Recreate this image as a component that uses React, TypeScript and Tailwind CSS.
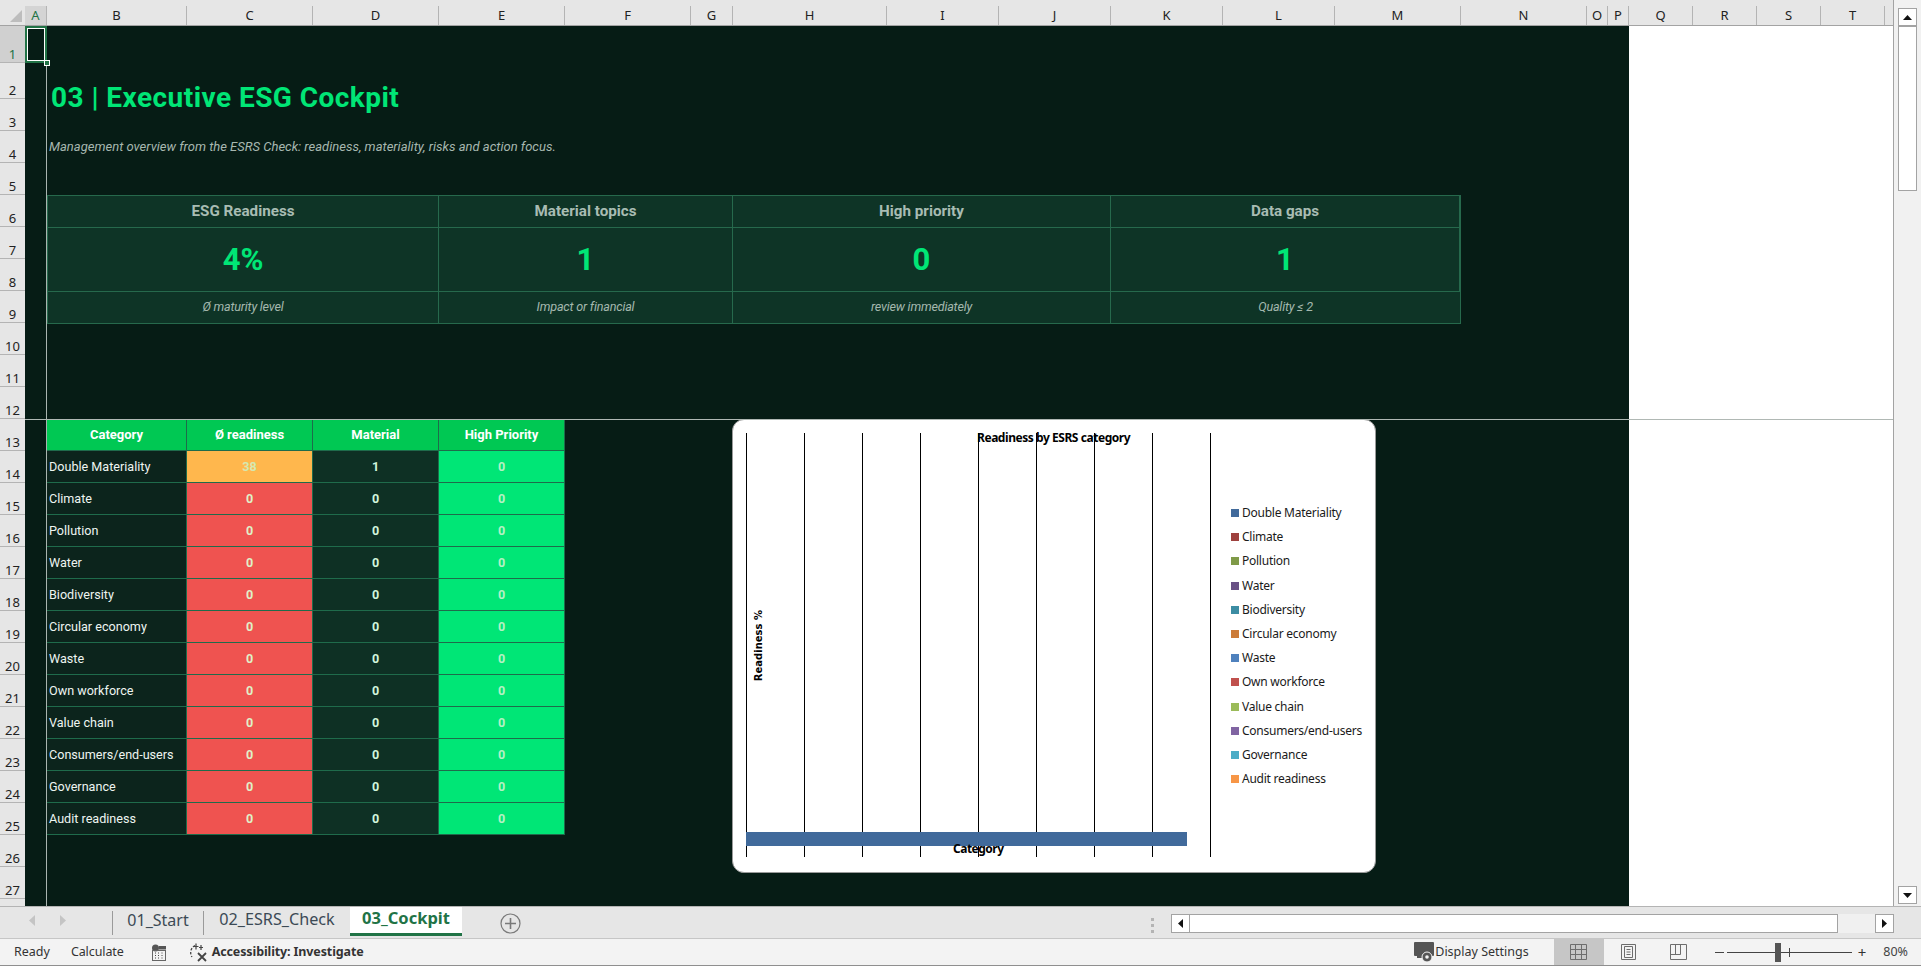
import { Fragment } from "react";

const columns = [
  { name: "A", w: "w-[22px]", active: true },
  { name: "B", w: "w-[140px]" },
  { name: "C", w: "w-[126px]" },
  { name: "D", w: "w-[126px]" },
  { name: "E", w: "w-[126px]" },
  { name: "F", w: "w-[126px]" },
  { name: "G", w: "w-[42px]" },
  { name: "H", w: "w-[154px]" },
  { name: "I", w: "w-[112px]" },
  { name: "J", w: "w-[112px]" },
  { name: "K", w: "w-[112px]" },
  { name: "L", w: "w-[112px]" },
  { name: "M", w: "w-[126px]" },
  { name: "N", w: "w-[126px]" },
  { name: "O", w: "w-[21px]" },
  { name: "P", w: "w-[21px]" },
  { name: "Q", w: "w-[64px]" },
  { name: "R", w: "w-[64px]" },
  { name: "S", w: "w-[64px]" },
  { name: "T", w: "w-[64px]" },
];

const kpis = [
  { label: "ESG Readiness", value: "4%", note: "Ø maturity level" },
  { label: "Material topics", value: "1", note: "Impact or financial" },
  { label: "High priority", value: "0", note: "review immediately" },
  { label: "Data gaps", value: "1", note: "Quality ≤ 2" },
];

const categories = [
  { name: "Double Materiality", readiness: "38", material: "1", color: "bg-[#416a9b]" },
  { name: "Climate", readiness: "0", material: "0", color: "bg-[#9e413e]" },
  { name: "Pollution", readiness: "0", material: "0", color: "bg-[#7f9a48]" },
  { name: "Water", readiness: "0", material: "0", color: "bg-[#695185]" },
  { name: "Biodiversity", readiness: "0", material: "0", color: "bg-[#3c8da3]" },
  { name: "Circular economy", readiness: "0", material: "0", color: "bg-[#cc7b38]" },
  { name: "Waste", readiness: "0", material: "0", color: "bg-[#4f81bd]" },
  { name: "Own workforce", readiness: "0", material: "0", color: "bg-[#c0504d]" },
  { name: "Value chain", readiness: "0", material: "0", color: "bg-[#9bbb59]" },
  { name: "Consumers/end-users", readiness: "0", material: "0", color: "bg-[#8064a2]" },
  { name: "Governance", readiness: "0", material: "0", color: "bg-[#4bacc6]" },
  { name: "Audit readiness", readiness: "0", material: "0", color: "bg-[#f79646]" },
];

const rowNumbers = Array.from({ length: 27 }, (_, i) => i + 1);
const uiFont = "font-['Noto_Sans',sans-serif]";
const sheetFont = "font-['Roboto',sans-serif]";

function ColumnHeader() {
  return (
    <div className={`flex h-[26px] shrink-0 border-b border-[#a3a3a3] bg-[#e6e6e6] pt-[6px] text-[13px] text-[#222] ${uiFont}`}>
      <div className="relative w-[25px] shrink-0">
        <svg className="absolute left-[10px] top-[4px]" width="12" height="12" viewBox="0 0 12 12">
          <polygon points="12,0 12,12 0,12" fill="#bdbdbd" />
        </svg>
      </div>
      {columns.map((c) => (
        <div
          key={c.name}
          className={`${c.w} flex shrink-0 items-center justify-center border-r border-[#b4b4b4] ${c.active ? "bg-[#d4d4d4] text-[#217346]" : ""}`}
        >
          {c.name}
        </div>
      ))}
    </div>
  );
}

function RowHeader() {
  return (
    <div className={`flex w-[25px] shrink-0 flex-col bg-[#e6e6e6] text-[13px] leading-[16px] text-[#222] ${uiFont}`}>
      {rowNumbers.map((n) => (
        <div
          key={n}
          className={`flex shrink-0 items-end justify-center border-b border-[#b4b4b4] ${n === 1 ? "h-[37px] bg-[#d0d0d0] text-[#217346]" : n === 2 ? "h-[36px]" : "h-8"}`}
        >
          {n}
        </div>
      ))}
    </div>
  );
}

function KpiTable() {
  return (
    <div className="grid w-[1414px] grid-cols-[391px_294px_378px_349px] grid-rows-[31px_64px_32px] border border-[#26694c] bg-[#0e3426]">
      {kpis.map((k) => (
        <div key={k.label} className="flex items-center justify-center border-r border-[#26694c] text-[15.2px] font-bold text-[#a8bcb3] last:border-r-0">
          {k.label}
        </div>
      ))}
      {kpis.map((k) => (
        <div key={k.label} className="flex items-center justify-center border-r border-t border-[#26694c] pt-[2px] text-[31px] font-bold text-[#00e676] last:border-r-0">
          {k.value}
        </div>
      ))}
      {kpis.map((k) => (
        <div key={k.label} className="flex items-center justify-center border-r border-t border-[#26694c] text-[12.6px] italic tracking-[-0.2px] text-[#a4b8ae] last:border-r-0">
          {k.note}
        </div>
      ))}
    </div>
  );
}

function CategoryTable() {
  return (
    <div className="grid w-[518px] shrink-0 grid-cols-[140px_126px_126px_126px] auto-rows-[32px] text-[12.6px]">
      {["Category", "Ø readiness", "Material", "High Priority"].map((h) => (
        <div key={h} className="flex items-center justify-center border-b border-r border-[#1f6b4b] bg-[#00c853] text-[13px] font-bold text-white">
          {h}
        </div>
      ))}
      {categories.map((c) => (
        <Fragment key={c.name}>
          <div className="flex items-center border-b border-r border-[#1f6b4b] bg-[#0c241c] pl-[2px] pt-[2px] text-[#eef5f1]">{c.name}</div>
          <div
            className={`flex items-center justify-center border-b border-r border-[#1f6b4b] pt-[2px] font-bold ${c.readiness === "38" ? "bg-[#ffb74d] text-[#d5e8b0]" : "bg-[#ef5350] text-[#dff0c8]"}`}
          >
            {c.readiness}
          </div>
          <div className="flex items-center justify-center border-b border-r border-[#1f6b4b] bg-[#0e3024] pt-[2px] font-bold text-[#d2f5dc]">{c.material}</div>
          <div className="flex items-center justify-center border-b border-r border-[#1f6b4b] bg-[#00e676] pt-[2px] font-bold text-[#b5f0c4]">0</div>
        </Fragment>
      ))}
    </div>
  );
}

function ReadinessChart() {
  const gridX = [13.5, 71.5, 129.5, 187.5, 245.5, 303.5, 361.5, 419.5, 477.5];
  return (
    <div className={`relative ml-[167px] h-[454px] w-[644px] shrink-0 rounded-xl border border-[#9a9a9a] bg-white text-black ${uiFont}`}>
      <svg className="absolute inset-0" width="642" height="452" viewBox="0 0 642 452">
        {gridX.map((x) => (
          <line key={x} x1={x} x2={x} y1="13" y2="437" stroke="#000" strokeWidth="1" />
        ))}
        <rect x="13" y="412" width="441" height="14" fill="#416a9b" />
      </svg>
      <div className="absolute left-[244px] top-[9px] text-[12px] font-bold leading-[18px] tracking-[-0.45px]">Readiness by ESRS category</div>
      <div className="absolute left-[220px] top-[420px] text-[12px] font-bold leading-[18px] tracking-[-0.5px]">Category</div>
      <div className="absolute left-[18px] top-[190px] origin-center rotate-180 font-['DejaVu_Sans',sans-serif] text-[10px] font-bold leading-[16px] [writing-mode:vertical-rl]">Readiness %</div>
      <div className="absolute left-[498px] top-[81px] flex flex-col text-[12px] tracking-[-0.25px] text-[#1a1a1a]">
        {categories.map((c) => (
          <div key={c.name} className="flex h-[24.2px] items-center gap-[3px]">
            <span className={`h-2 w-2 ${c.color}`} />
            {c.name}
          </div>
        ))}
      </div>
    </div>
  );
}

function Sheet() {
  return (
    <div className={`relative flex min-w-0 flex-1 overflow-hidden ${sheetFont}`}>
      <div className="w-[1604px] shrink-0 bg-[#061c15] pl-[21px]">
        <div className="h-full border-l border-[#a9b5b0]">
          <div className="h-[393px] pt-[37px]">
            <div className="flex h-[68px] items-center pl-[4px] pt-[2px] text-[28px] font-bold tracking-[0.45px] text-[#00e676]">03 | Executive ESG Cockpit</div>
            <div className="flex h-8 items-center pl-[2px] text-[13px] italic text-[#a7b8b0]">
              Management overview from the ESRS Check: readiness, materiality, risks and action focus.
            </div>
            <div className="mt-8">
              <KpiTable />
            </div>
          </div>
          <div className="flex items-start">
            <CategoryTable />
            <ReadinessChart />
          </div>
        </div>
      </div>
      <div className="flex-1 bg-white" />
      {/* freeze pane line */}
      <div className="absolute inset-x-0 top-[393px] h-px bg-[#b0b8b4]" />
      {/* A1 selection */}
      <div className="absolute left-0 top-0 h-[37px] w-[22px] border-2 border-[#217346]">
        <div className="h-full w-full border border-white" />
      </div>
      <div className="absolute left-[19px] top-[34px] h-[6px] w-[6px] border border-white bg-[#217346]" />
    </div>
  );
}

function VerticalScrollbar() {
  return (
    <div className="flex w-[28px] shrink-0 flex-col items-center border-l border-[#a3a3a3] bg-[#f1f1f1] pt-2">
      <div className="flex h-[18px] w-[19px] items-center justify-center border border-[#a3a3a3] bg-white">
        <svg width="9" height="5" viewBox="0 0 9 5"><polygon points="4.5,0 9,5 0,5" fill="#111" /></svg>
      </div>
      <div className="h-[165px] w-[19px] border border-[#a3a3a3] bg-white" />
      <div className="mt-auto mb-[2px] flex h-[18px] w-[19px] items-center justify-center border border-[#a3a3a3] bg-white">
        <svg width="9" height="5" viewBox="0 0 9 5"><polygon points="0,0 9,0 4.5,5" fill="#111" /></svg>
      </div>
    </div>
  );
}

function TabBar() {
  return (
    <div className={`flex h-[32px] shrink-0 items-start border-t border-[#b4b4b4] bg-[#e6e6e6] text-[16px] ${uiFont}`}>
      <div className="flex h-[26px] w-[112px] items-center gap-[25px] pl-[29px]">
        <svg width="6" height="11" viewBox="0 0 6 11"><polygon points="6,0 6,11 0,5.5" fill="#c4c4c4" /></svg>
        <svg width="6" height="11" viewBox="0 0 6 11"><polygon points="0,0 0,11 6,5.5" fill="#c4c4c4" /></svg>
      </div>
      <div className="mt-[4px] flex h-[24px] w-[91px] items-center justify-center border-l border-[#9a9a9a] pb-[7px] text-[#3c4a55]">01_Start</div>
      <div className="mt-[4px] flex h-[24px] w-[147px] items-center justify-center border-l border-[#9a9a9a] pb-[7px] text-[16.2px] text-[#3c4a55]">02_ESRS_Check</div>
      <div className="flex h-[29px] w-[112px] items-center justify-center border-b-[3px] border-[#217346] bg-white pb-[3px] text-[16.5px] font-bold text-[#217346]">03_Cockpit</div>
      <svg className="ml-[38px] mt-[6px]" width="21" height="21" viewBox="0 0 21 21" fill="none" stroke="#7a7a7a">
        <circle cx="10.5" cy="10.5" r="9.5" strokeWidth="1.2" />
        <path d="M10.5 5v11M5 10.5h11" strokeWidth="1.6" />
      </svg>
      <div className="ml-auto flex items-center">
        <div className="mr-[17px] mt-[10px] flex flex-col gap-[3px]">
          <span className="h-[3px] w-[3px] bg-[#b4b4b4]" />
          <span className="h-[3px] w-[3px] bg-[#b4b4b4]" />
          <span className="h-[3px] w-[3px] bg-[#b4b4b4]" />
        </div>
        <div className="mr-[27px] mt-[7px] flex h-[19px] w-[723px]">
          <div className="flex w-[19px] items-center justify-center border border-[#a3a3a3] bg-white">
            <svg width="5" height="9" viewBox="0 0 5 9"><polygon points="5,0 5,9 0,4.5" fill="#111" /></svg>
          </div>
          <div className="w-[648px] border-y border-r border-[#a3a3a3] bg-white" />
          <div className="flex-1 bg-[#f0f0f0]" />
          <div className="flex w-[19px] items-center justify-center border border-[#a3a3a3] bg-white">
            <svg width="5" height="9" viewBox="0 0 5 9"><polygon points="0,0 0,9 5,4.5" fill="#111" /></svg>
          </div>
        </div>
      </div>
    </div>
  );
}

function StatusBar() {
  return (
    <div className={`flex h-[28px] shrink-0 items-center border-y border-b-[#8f8f8f] border-t-[#c6c6c6] bg-[#f3f3f3] text-[12.5px] text-[#333] ${uiFont}`}>
      <span className="ml-[14px]">Ready</span>
      <span className="ml-[21px] tracking-[-0.1px]">Calculate</span>
      <svg className="ml-[27px]" width="16" height="17" viewBox="0 0 16 17">
        <circle cx="4.5" cy="4" r="3.5" fill="#555" />
        <rect x="8" y="2" width="7" height="3.5" fill="#555" />
        <rect x="1.5" y="6.5" width="13" height="10" fill="none" stroke="#666" />
        <path d="M4 9h1M7 9h1M10.5 9h1M4 11.5h1M7 11.5h1M10.5 11.5h1M4 14h1M7 14h1M10.5 14h1" stroke="#444" />
      </svg>
      <svg className="ml-[22px]" width="20" height="20" viewBox="0 0 20 20" fill="none" stroke="#444">
        <path d="M6 3.5A8 8 0 0 0 3 15" strokeWidth="1.3" strokeDasharray="2.5 1.5" />
        <path d="M7 1.5v6M4.5 4.5h5M12 3v5M10 5.5h4" strokeWidth="1.2" />
        <path d="M9 11l8 8M17 11l-8 8" strokeWidth="1.8" />
      </svg>
      <span className="ml-[3px] font-bold tracking-[-0.12px]">Accessibility: Investigate</span>
      <div className="ml-auto flex h-full items-center">
        <svg width="21" height="22" viewBox="0 0 21 22">
          <rect x="0" y="1" width="20" height="14" rx="1" fill="#555" />
          <rect x="3" y="15" width="6" height="2" fill="#555" />
          <circle cx="13" cy="16" r="5" fill="#555" stroke="#f3f3f3" />
          <circle cx="13" cy="16" r="1.8" fill="#f3f3f3" />
        </svg>
        <span className="mr-[25px]">Display Settings</span>
        <div className="flex h-full w-[50px] items-center justify-center bg-[#c6c6c6]">
          <svg width="17" height="16" viewBox="0 0 17 16" fill="none" stroke="#6d6d6d"><path d="M.5.5h16v15H.5zM.5 5.5h16M.5 10.5h16M5.5.5v15M11.5.5v15" /></svg>
        </div>
        <div className="flex w-[50px] justify-center">
          <svg width="15" height="16" viewBox="0 0 15 16" fill="none" stroke="#6d6d6d"><path d="M.5.5h14v15H.5z" /><path d="M3.5 2.5h8v11h-8zM5.5 5.5h4M5.5 8h4M5.5 10.5h4" /></svg>
        </div>
        <div className="flex w-[50px] justify-center">
          <svg width="17" height="16" viewBox="0 0 17 16" fill="none" stroke="#6d6d6d"><path d="M.5.5h16v15H.5zM.5 10.5h10M5.5.5v10M10.5.5v10" /></svg>
        </div>
        <div className="ml-[11px] flex items-center">
          <span className="h-px w-[9px] bg-[#444]" />
          <div className="relative ml-[3px] h-px w-[125px] bg-[#444]">
            <span className="absolute left-[48px] top-[-9px] h-[19px] w-[6px] bg-[#555]" />
            <span className="absolute left-[62px] top-[-4px] h-[9px] w-px bg-[#444]" />
          </div>
          <span className="ml-[6px] text-[15px] leading-none">+</span>
        </div>
        <span className="ml-[17px] mr-[13px] text-[#444]">80%</span>
      </div>
    </div>
  );
}

export default function App() {
  return (
    <div className="flex h-[966px] w-[1921px] flex-col overflow-hidden bg-[#e6e6e6]">
      <div className="flex min-h-0 flex-1">
        <div className="flex w-[1893px] shrink-0 flex-col">
          <ColumnHeader />
          <div className="flex min-h-0 flex-1 overflow-hidden">
            <RowHeader />
            <Sheet />
          </div>
        </div>
        <VerticalScrollbar />
      </div>
      <TabBar />
      <StatusBar />
    </div>
  );
}
